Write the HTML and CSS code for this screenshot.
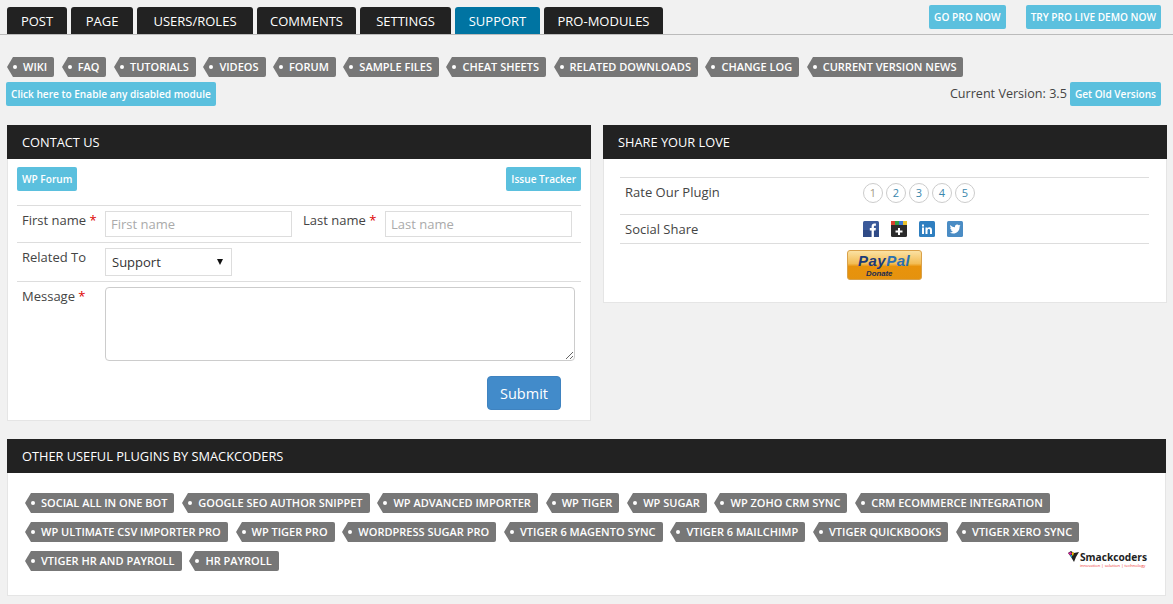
FILE: index.html
```html
<!DOCTYPE html>
<html lang="en">
<head>
  <meta charset="UTF-8" />
  <title>Support</title>
  <link rel="stylesheet" href="styles.css">
</head>
<body>

  <div class="topbar">
    <nav class="tabs">
      <a class="tab tab-post">POST</a>
      <a class="tab tab-page">PAGE</a>
      <a class="tab tab-users">USERS/ROLES</a>
      <a class="tab tab-comments">COMMENTS</a>
      <a class="tab tab-settings">SETTINGS</a>
      <a class="tab tab-support active">SUPPORT</a>
      <a class="tab tab-pro">PRO-MODULES</a>
    </nav>
    <div class="pro-links">
      <a class="btn-info btn-pro">GO PRO NOW</a>
      <a class="btn-info btn-pro">TRY PRO LIVE DEMO NOW</a>
    </div>
  </div>

  <div class="tags help-tags">
    <a class="tag">WIKI</a>
    <a class="tag">FAQ</a>
    <a class="tag">TUTORIALS</a>
    <a class="tag">VIDEOS</a>
    <a class="tag">FORUM</a>
    <a class="tag">SAMPLE FILES</a>
    <a class="tag">CHEAT SHEETS</a>
    <a class="tag">RELATED DOWNLOADS</a>
    <a class="tag">CHANGE LOG</a>
    <a class="tag">CURRENT VERSION NEWS</a>
  </div>

  <div class="version-row">
    <a class="btn-info">Click here to Enable any disabled module</a>
    <div class="version">
      <span>Current Version: 3.5</span>
      <a class="btn-info">Get Old Versions</a>
    </div>
  </div>

  <div class="columns">
    <section class="panel contact">
      <h2 class="panel-title">CONTACT US</h2>
      <div class="contact-links">
        <a class="btn-info">WP Forum</a>
        <a class="btn-info">Issue Tracker</a>
      </div>
      <form>
        <div class="form-row names">
          <label class="lbl">First name <em>*</em></label>
          <input class="field first" type="text" placeholder="First name" />
          <label class="lbl lbl-last">Last name <em>*</em></label>
          <input class="field last" type="text" placeholder="Last name" />
        </div>
        <div class="form-row related">
          <label class="lbl">Related To</label>
          <div class="select">Support<span class="caret"></span></div>
        </div>
        <div class="form-row message">
          <label class="lbl">Message <em>*</em></label>
          <textarea class="msg"></textarea>
        </div>
        <div class="submit-row">
          <button class="submit" type="button">Submit</button>
        </div>
      </form>
    </section>

    <section class="panel share">
      <h2 class="panel-title">SHARE YOUR LOVE</h2>
      <div class="share-body">
        <div class="share-row rate">
          <span class="share-label">Rate Our Plugin</span>
          <div class="stars">
            <a class="num">1</a>
            <a class="num">2</a>
            <a class="num">3</a>
            <a class="num">4</a>
            <a class="num">5</a>
          </div>
        </div>
        <div class="share-row social">
          <span class="share-label">Social Share</span>
          <div class="icons">
            <svg width="16" height="16" viewBox="0 0 16 16">
              <rect width="16" height="16" rx="1.5" fill="#3b5a9a"/>
              <rect y="9" width="16" height="7" fill="#2f4a86"/>
              <path d="M8.6 16V9.4H6.8V7h1.8V5.400C8.600 3.500 9.700 2.500 11.400 2.500h1.500v2.300h-1c-.8 0-1 .4-1 1V7h2l-.3 2.400h-1.700V16z" fill="#fff"/>
            </svg>
            <svg width="16" height="16" viewBox="0 0 16 16">
              <rect width="16" height="16" rx="1.5" fill="#2a2a2a"/>
              <rect width="4" height="4" fill="#d8402f"/>
              <rect x="4" width="4" height="4" fill="#2f9e44"/>
              <rect x="8" width="4" height="4" fill="#3a78d8"/>
              <rect x="12" width="4" height="4" fill="#e8c12c"/>
              <path d="M7 7h2v2.500h2.500v2H9V14H7v-2.500H4.500v-2H7z" fill="#fff"/>
            </svg>
            <svg width="16" height="16" viewBox="0 0 16 16">
              <rect width="16" height="16" rx="1.5" fill="#2f7fc0"/>
              <path d="M3 6.500h2V13H3zM3 3.500h2v2H3zM6.500 6.500h2v1c.4-.7 1.100-1.200 2.100-1.200 1.700 0 2.400 1.100 2.400 2.900V13h-2V9.500c0-.9-.3-1.500-1.100-1.500-.9 0-1.400.6-1.400 1.600V13h-2z" fill="#fff"/>
            </svg>
            <svg width="16" height="16" viewBox="0 0 16 16">
              <rect width="16" height="16" rx="1.5" fill="#4a8cc4"/>
              <path d="M13.500 4.600c-.4.200-.8.300-1.300.4.500-.3.800-.7 1-1.200-.4.300-.9.400-1.400.5a2.200 2.200 0 0 0-3.800 2C6.200 6.200 4.600 5.400 3.500 4c-.6 1-.3 2.300.7 3-.4 0-.7-.1-1-.3 0 1.100.8 2 1.800 2.200-.3.100-.7.100-1 0 .3.900 1.100 1.500 2.100 1.500-1 .8-2.200 1.100-3.300 1 3.700 2.300 9.800.8 9.800-6 .4-.2.700-.5.900-.8z" fill="#fff"/>
            </svg>
          </div>
        </div>
        <div class="donate">
          <svg class="paypal" width="75" height="30" viewBox="0 0 75 30">
            <defs>
              <linearGradient id="pp" x1="0" y1="0" x2="0" y2="1">
                <stop offset="0" stop-color="#fbe3a6"/>
                <stop offset="0.45" stop-color="#f3bd55"/>
                <stop offset="0.55" stop-color="#e8930c"/>
                <stop offset="1" stop-color="#e5920e"/>
              </linearGradient>
            </defs>
            <rect x="0.500" y="0.500" width="74" height="29" rx="2.500" fill="url(#pp)" stroke="#d9a14a"/>
            <text x="11" y="16" class="pp-word"><tspan fill="#1c3a78">Pay</tspan><tspan fill="#2a6fb0">Pal</tspan></text>
            <text x="19" y="26" class="pp-donate">Donate</text>
          </svg>
        </div>
      </div>
    </section>
  </div>

  <section class="panel plugins">
    <h2 class="panel-title">OTHER USEFUL PLUGINS BY SMACKCODERS</h2>
    <div class="plugins-body">
      <div class="tags plugin-tags">
        <a class="tag">SOCIAL ALL IN ONE BOT</a>
        <a class="tag">GOOGLE SEO AUTHOR SNIPPET</a>
        <a class="tag">WP ADVANCED IMPORTER</a>
        <a class="tag">WP TIGER</a>
        <a class="tag">WP SUGAR</a>
        <a class="tag">WP ZOHO CRM SYNC</a>
        <a class="tag">CRM ECOMMERCE INTEGRATION</a>
        <a class="tag">WP ULTIMATE CSV IMPORTER PRO</a>
        <a class="tag">WP TIGER PRO</a>
        <a class="tag">WORDPRESS SUGAR PRO</a>
        <a class="tag">VTIGER 6 MAGENTO SYNC</a>
        <a class="tag">VTIGER 6 MAILCHIMP</a>
        <a class="tag">VTIGER QUICKBOOKS</a>
        <a class="tag">VTIGER XERO SYNC</a>
        <a class="tag">VTIGER HR AND PAYROLL</a>
        <a class="tag">HR PAYROLL</a>
      </div>
      <div class="logo">
        <svg width="13" height="13" viewBox="0 0 13 13">
          <path d="M1 2l3-2 3 2 5-1-3 5-2 5-3-5z" fill="#222"/>
          <path d="M1 2l3-1 1 2-2 1z" fill="#d6249f"/>
          <path d="M5 1l2 1-1 3-1-1z" fill="#f2c200"/>
          <path d="M3 4l2 0 0 3z" fill="#19a3d8"/>
        </svg>
        <div class="logo-text">
          <span class="logo-name">Smackcoders</span>
          <span class="logo-sub">innovation | solution | technology</span>
        </div>
      </div>
    </div>
  </section>

</body>
</html>
```

FILE: styles.css
```css
* {
  box-sizing: border-box;
}

body {
  margin: 0;
  background: #f1f1f1;
  color: #444;
  font-family: 'Open Sans', sans-serif;
  font-size: 13px;
}

/* top tabs */
.topbar {
  display: flex;
  justify-content: space-between;
  height: 35px;
  padding: 0 0 0 7px;
  border-bottom: 1px solid #bbb;
}

.tabs {
  display: flex;
  gap: 4px;
  padding-top: 7px;
}

.tab {
  display: block;
  height: 27px;
  background: #222;
  color: #fff;
  font-size: 13px;
  line-height: 28px;
  text-align: center;
  border-radius: 3px 3px 0 0;
}

.tab-post { width: 60px; }
.tab-page { width: 62px; }
.tab-users { width: 116px; }
.tab-comments { width: 99px; }
.tab-settings { width: 91px; }
.tab-support { width: 85px; }
.tab-pro { width: 119px; }

.tab.active {
  background: #0074a2;
}

.pro-links {
  display: flex;
  gap: 20px;
  padding: 5px 12px 0 0;
}

.btn-info {
  display: block;
  height: 24px;
  padding: 0 5px;
  background: #5bc0de;
  color: #fff;
  font-size: 10.100px;
  font-weight: 600;
  line-height: 24px;
  border-radius: 2px;
  white-space: nowrap;
}

/* tag labels */
.tags {
  display: flex;
  flex-wrap: wrap;
}

.tag {
  position: relative;
  display: block;
  height: 20px;
  margin-left: 6px;
  padding: 0 7px 0 10px;
  background: #777;
  color: #fff;
  font-size: 11px;
  font-weight: 600;
  line-height: 20px;
  border-radius: 0 2px 2px 0;
  white-space: nowrap;
}

.tag::before {
  content: '';
  position: absolute;
  top: 0;
  left: -6px;
  border-style: solid;
  border-width: 10px 6px 10px 0;
  border-color: transparent #777 transparent transparent;
}

.tag::after {
  content: '';
  position: absolute;
  top: 8px;
  left: 0;
  width: 4px;
  height: 4px;
  background: #fff;
  border-radius: 50%;
}

.help-tags {
  gap: 12px 7.500px;
  padding: 22px 0 0 7px;
}

.version-row {
  display: flex;
  justify-content: space-between;
  align-items: center;
  padding: 5px 12px 0 6px;
}

.version {
  display: flex;
  align-items: center;
  gap: 3px;
}

.version span {
  padding-bottom: 2px;
  font-size: 12.600px;
}

/* panels */
.panel {
  background: #fff;
  border: 1px solid #e5e5e5;
  border-top: 0;
}

.panel-title {
  margin: 0 -1px;
  height: 34px;
  padding-left: 15px;
  background: #222;
  color: #fff;
  font-size: 12.800px;
  font-weight: 400;
  line-height: 34px;
}

.columns {
  display: flex;
  align-items: flex-start;
  gap: 12px;
  padding: 19px 7px 0;
}

.contact {
  flex: 0 0 584px;
  height: 296px;
  padding: 0 9px;
}

.contact .panel-title {
  margin: 0 -10px;
}

.contact-links {
  display: flex;
  justify-content: space-between;
  padding: 8px 0 14px;
}

.form-row {
  display: flex;
  align-items: flex-start;
  border-top: 1px solid #ddd;
}

.lbl {
  flex: 0 0 88px;
  padding: 0 0 0 5px;
  color: #444;
  line-height: 18px;
}

.lbl em {
  color: #d00;
  font-style: normal;
}

.lbl-last {
  flex: 0 0 93px;
  padding-left: 11px;
}

.names {
  height: 37px;
  padding-top: 5px;
}

.field {
  height: 26px;
  padding: 0 5px;
  border: 1px solid #ddd;
  font-family: inherit;
  font-size: 13px;
  outline: none;
}

.field::placeholder {
  color: #aaa;
}

.field.first,
.field.last {
  width: 187px;
}

.related {
  height: 39px;
  padding-top: 5px;
}

.select {
  position: relative;
  width: 127px;
  height: 28px;
  padding-left: 6px;
  border: 1px solid #ddd;
  color: #333;
  line-height: 27px;
}

.caret {
  position: absolute;
  top: 10px;
  right: 8px;
  border-style: solid;
  border-width: 6px 3px 0;
  border-color: #111 transparent transparent;
}

.message {
  padding-top: 5px;
}

.msg {
  display: block;
  width: 470px;
  height: 74px;
  border: 1px solid #ccc;
  border-radius: 4px;
}

.submit-row {
  display: flex;
  justify-content: flex-end;
  padding: 15px 20px 0 0;
}

.submit {
  width: 74px;
  height: 34px;
  padding: 0;
  background: #428bca;
  color: #fff;
  border: 1px solid #3f83c0;
  border-radius: 4px;
  font-family: inherit;
  font-size: 14.500px;
}

.share {
  flex: 0 0 564px;
  height: 178px;
}

.share-body {
  padding: 18px 17px 0 16px;
}

.share-row {
  display: flex;
  align-items: center;
  border-top: 1px solid #ddd;
}

.share-label {
  flex: 0 0 243px;
  padding-left: 5px;
}

.rate {
  height: 37px;
  padding-bottom: 8px;
}

.rate .stars {
  margin-top: 2px;
}

.social {
  height: 30px;
  border-bottom: 1px solid #ddd;
}

.stars {
  display: flex;
  gap: 3px;
}

.num {
  display: block;
  width: 20px;
  height: 20px;
  color: #3a87ad;
  font-size: 11px;
  line-height: 18px;
  text-align: center;
  border: 1px solid #ccc;
  border-radius: 50%;
}

.num:first-child {
  color: #a39a85;
}

.icons {
  display: flex;
  gap: 12px;
}

.icons svg {
  display: block;
}

.donate {
  padding: 6px 0 0 227px;
}

.paypal {
  display: block;
}

.pp-word {
  font-family: 'Liberation Sans', sans-serif;
  font-size: 15px;
  font-style: italic;
  font-weight: 700;
  letter-spacing: 0.500px;
}

.pp-donate {
  fill: #1a2a50;
  font-family: 'Liberation Sans', sans-serif;
  font-size: 7.800px;
  font-style: italic;
  font-weight: 700;
}

.plugins {
  height: 157px;
  margin: 18px 7px 0;
}

.plugins-body {
  position: relative;
  padding: 20px 20px 0 17px;
}

.plugin-tags {
  gap: 9px 7.800px;
}

.logo {
  position: absolute;
  top: 78px;
  right: 18px;
  display: flex;
  align-items: flex-start;
}

.logo-text {
  display: flex;
  flex-direction: column;
}

.logo-name {
  color: #222;
  font-size: 10.200px;
  font-weight: 700;
  line-height: 12px;
}

.logo-sub {
  color: #e33;
  font-size: 4.100px;
  line-height: 5px;
}
```
